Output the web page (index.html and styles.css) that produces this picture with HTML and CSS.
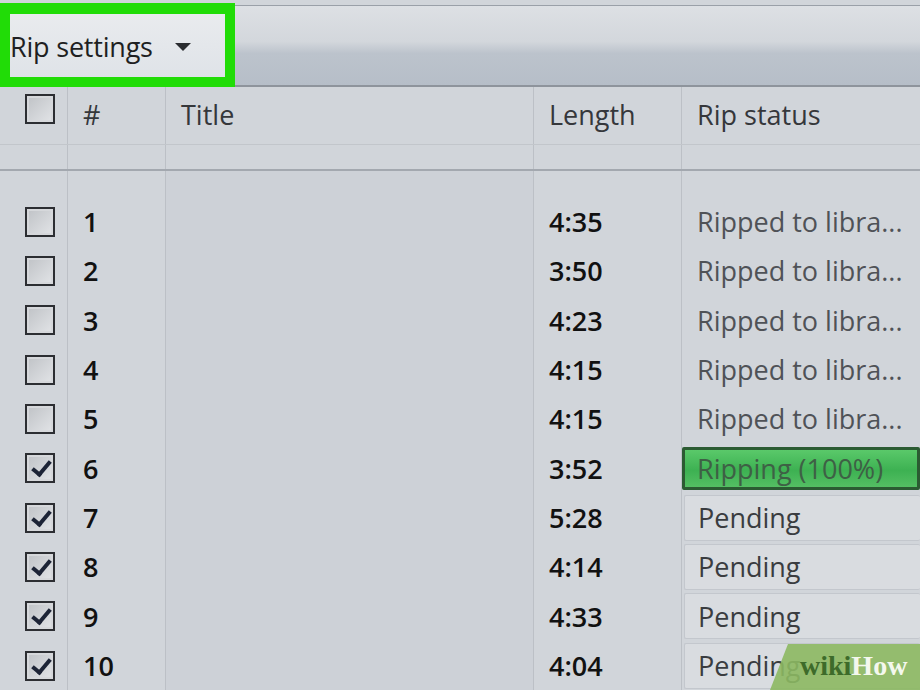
FILE: index.html
```html
<!DOCTYPE html>
<html lang="en">
<head>
    <meta charset="UTF-8">
    <title>Rip CD</title>
    <link rel="stylesheet" href="styles.css">
</head>
<body>

<div class="window">
    <div class="toolbar">
        <div class="rip-button">
            <span class="rip-label">Rip settings</span>
            <span class="caret"></span>
        </div>
    </div>

    <div class="list">
        <div class="row header">
            <div class="cell check-cell"><span class="checkbox"></span></div>
            <div class="cell num">#</div>
            <div class="cell title">Title</div>
            <div class="cell length">Length</div>
            <div class="cell status">Rip status</div>
        </div>
        <div class="row subheader">
            <div class="cell check-cell"></div>
            <div class="cell num"></div>
            <div class="cell title"></div>
            <div class="cell length"></div>
            <div class="cell status"></div>
        </div>

        <div class="tracks">
            <div class="row track">
                <div class="cell check-cell"><span class="checkbox"></span></div>
                <div class="cell num">1</div>
                <div class="cell title"></div>
                <div class="cell length">4:35</div>
                <div class="cell status"><span class="ripped">Ripped to libra...</span></div>
            </div>
            <div class="row track">
                <div class="cell check-cell"><span class="checkbox"></span></div>
                <div class="cell num">2</div>
                <div class="cell title"></div>
                <div class="cell length">3:50</div>
                <div class="cell status"><span class="ripped">Ripped to libra...</span></div>
            </div>
            <div class="row track">
                <div class="cell check-cell"><span class="checkbox"></span></div>
                <div class="cell num">3</div>
                <div class="cell title"></div>
                <div class="cell length">4:23</div>
                <div class="cell status"><span class="ripped">Ripped to libra...</span></div>
            </div>
            <div class="row track">
                <div class="cell check-cell"><span class="checkbox"></span></div>
                <div class="cell num">4</div>
                <div class="cell title"></div>
                <div class="cell length">4:15</div>
                <div class="cell status"><span class="ripped">Ripped to libra...</span></div>
            </div>
            <div class="row track">
                <div class="cell check-cell"><span class="checkbox"></span></div>
                <div class="cell num">5</div>
                <div class="cell title"></div>
                <div class="cell length">4:15</div>
                <div class="cell status"><span class="ripped">Ripped to libra...</span></div>
            </div>
            <div class="row track">
                <div class="cell check-cell"><span class="checkbox checked"></span></div>
                <div class="cell num">6</div>
                <div class="cell title"></div>
                <div class="cell length">3:52</div>
                <div class="cell status"><span class="progress">Ripping (100%)</span></div>
            </div>
            <div class="row track">
                <div class="cell check-cell"><span class="checkbox checked"></span></div>
                <div class="cell num">7</div>
                <div class="cell title"></div>
                <div class="cell length">5:28</div>
                <div class="cell status"><span class="pending">Pending</span></div>
            </div>
            <div class="row track">
                <div class="cell check-cell"><span class="checkbox checked"></span></div>
                <div class="cell num">8</div>
                <div class="cell title"></div>
                <div class="cell length">4:14</div>
                <div class="cell status"><span class="pending">Pending</span></div>
            </div>
            <div class="row track">
                <div class="cell check-cell"><span class="checkbox checked"></span></div>
                <div class="cell num">9</div>
                <div class="cell title"></div>
                <div class="cell length">4:33</div>
                <div class="cell status"><span class="pending">Pending</span></div>
            </div>
            <div class="row track">
                <div class="cell check-cell"><span class="checkbox checked"></span></div>
                <div class="cell num">10</div>
                <div class="cell title"></div>
                <div class="cell length">4:04</div>
                <div class="cell status"><span class="pending">Pending</span></div>
            </div>
        </div>
    </div>

    <div class="watermark"><span class="wiki">wiki</span><span class="how">How</span></div>
</div>

</body>
</html>
```

FILE: styles.css
```css
body {
    margin: 0;
    background-color: #d1d5da;
    font-family: "Open Sans", "Noto Sans", sans-serif;
    overflow: hidden;
}
.window {
    width: 920px;
    height: 690px;
    position: relative;
    overflow: hidden;
    background-color: #d1d5da;
}

/* toolbar with the highlighted button */
.toolbar {
    height: 79px;
    margin-top: 5px;
    border-top: 1px solid #9aa0a8;
    border-bottom: 2px solid #8e949c;
    background: linear-gradient(#dde0e4 0%, #d3d7dc 45%, #bcc3cc 60%, #b6bec8 100%);
    display: flex;
    align-items: stretch;
}
.rip-button {
    width: 215px;
    margin-top: -3px;
    margin-bottom: -2px;
    border: 10px solid #21dc07;
    border-top-width: 11px;
    background: linear-gradient(#e9ebee, #dfe3e8);
    display: flex;
    align-items: center;
}
.rip-label {
    font-size: 27px;
    letter-spacing: -0.2px;
    color: #1e1f22;
    margin-top: 2px;
}
.caret {
    width: 0;
    height: 0;
    border-left: 8px solid transparent;
    border-right: 8px solid transparent;
    border-top: 8px solid #2a2c30;
    margin-left: 22px;
    margin-top: 2px;
}

/* list */
.row {
    display: grid;
    grid-template-columns: 67px 98px 368px 148px 1fr;
}
.cell {
    border-left: 1px solid #bcc0c6;
    display: flex;
    align-items: center;
    font-size: 27px;
    color: #111;
    white-space: nowrap;
    padding-left: 15px;
}
.cell.check-cell {
    border-left: none;
    padding-left: 25px;
}
.cell.title {
    background-color: #cdd1d7;
}

.header {
    height: 57px;
    border-bottom: 1px solid #c2c6cb;
}
.header .cell {
    color: #35373b;
    padding-bottom: 2px;
}
.header .cell.title {
    background-color: transparent;
}
.subheader {
    height: 24px;
    border-bottom: 2px solid #a3a8af;
}
.subheader .cell.title {
    background-color: transparent;
}

.tracks .row:first-child .cell {
    padding-top: 26px;
}
.tracks .row:first-child {
    height: 75.33px;
}
.track {
    height: 49.33px;
}
.track .cell.num,
.track .cell.length {
    font-weight: 600;
}
.track .cell.status {
    color: #4f5257;
    padding-left: 0;
}

/* checkbox */
.checkbox {
    width: 26px;
    height: 26px;
    border: 2px solid #2c2e32;
    background: linear-gradient(135deg, #bfc2c6, #e2e4e7);
    box-shadow: inset 0 0 0 2px #d6d8db;
    display: block;
    position: relative;
}
.header .checkbox {
    margin-top: -12px;
}
.checkbox.checked::after {
    content: "";
    position: absolute;
    left: 9px;
    top: 2px;
    width: 7px;
    height: 15px;
    border-right: 4px solid #1d2436;
    border-bottom: 4px solid #1d2436;
    transform: rotate(40deg);
}

/* rip status decorations */
.ripped {
    padding-left: 15px;
}
.progress {
    flex: 1;
    height: 37px;
    border: 3px solid #2b5b32;
    border-radius: 2px;
    background: linear-gradient(#5ac96a, #3db152 55%, #54bf63);
    color: #3e6045;
    padding-left: 12px;
    display: flex;
    align-items: center;
}
.pending {
    flex: 1;
    height: 44px;
    margin-left: 2px;
    border: 1px solid #c3c7cd;
    border-right: none;
    border-radius: 2px;
    background-color: #d9dce0;
    padding-left: 13px;
    display: flex;
    align-items: center;
    color: #3a3c40;
}

/* watermark in the corner */
.watermark {
    position: absolute;
    right: 0;
    bottom: 0;
    width: 150px;
    height: 46px;
    box-sizing: border-box;
    padding-left: 30px;
    background-color: rgba(140, 184, 98, 0.9);
    clip-path: polygon(12% 0, 100% 0, 100% 100%, 0 100%);
    font-family: "Liberation Serif", "DejaVu Serif", serif;
    font-weight: bold;
    font-size: 28px;
    line-height: 44px;
}
.wiki {
    color: #3d6b2a;
}
.how {
    color: #f4f8ee;
}
```
